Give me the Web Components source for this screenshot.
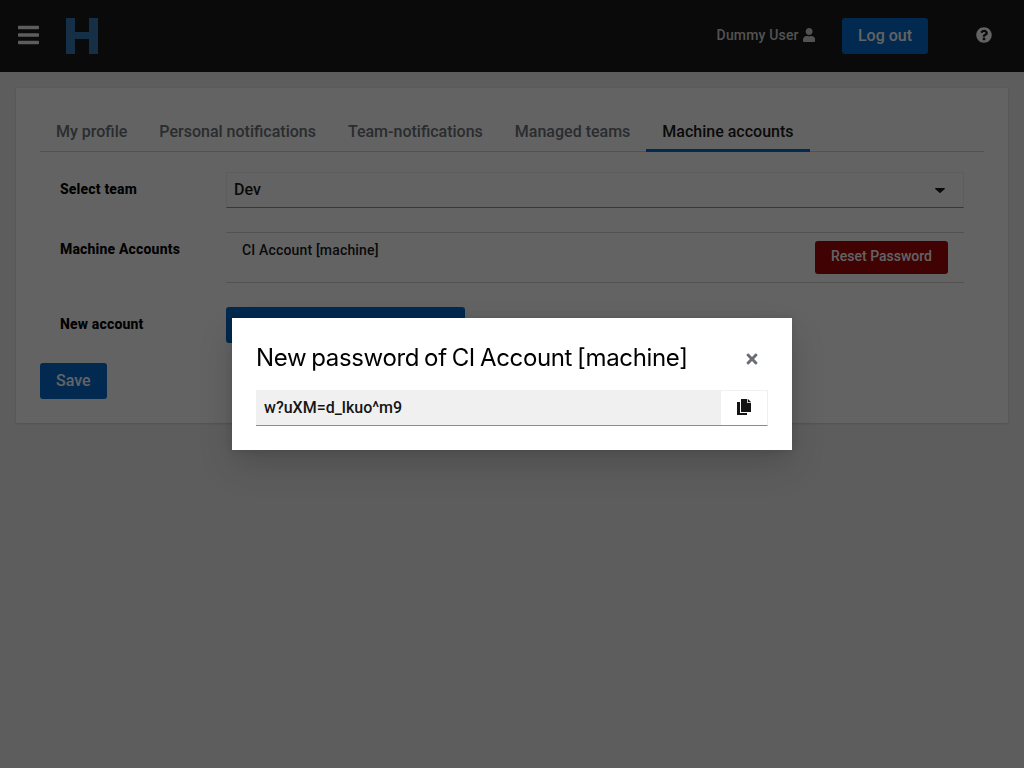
<!DOCTYPE html>
<html lang="en">
<head>
<meta charset="utf-8">
<title>Machine accounts</title>
<style>
html, body { margin: 0; height: 100%; overflow: hidden; }
body { background: #f0f0f0; color: #151515; font: 500 14px/21px Roboto, "Liberation Sans", sans-serif; letter-spacing: .16px; }
</style>
</head>
<body>
<app-header user="Dummy User"></app-header>
<app-card>
  <app-tabs>
    <app-tab>My profile</app-tab>
    <app-tab>Personal notifications</app-tab>
    <app-tab>Team-notifications</app-tab>
    <app-tab>Managed teams</app-tab>
    <app-tab current>Machine accounts</app-tab>
  </app-tabs>
  <app-form>
    <form-row label="Select team"><app-select>Dev</app-select></form-row>
    <form-row label="Machine Accounts">
      <account-item>CI Account [machine]<app-button slot="action" variant="danger">Reset Password</app-button></account-item>
    </form-row>
    <form-row label="New account"><app-button wide></app-button></form-row>
  </app-form>
  <app-button>Save</app-button>
</app-card>
<app-modal heading="New password of CI Account [machine]">
  <clipboard-copy>w?uXM=d_lkuo^m9</clipboard-copy>
</app-modal>
<script>
function define(name, html, setup) {
  const t = document.createElement('template');
  t.innerHTML = '<style>*{box-sizing:border-box}:host{display:block;box-sizing:border-box}svg{display:block;fill:currentColor}</style>' + html;
  customElements.define(name, class extends HTMLElement {
    constructor() {
      super();
      this.attachShadow({ mode: 'open' }).append(t.content.cloneNode(true));
    }
    connectedCallback() { if (setup) setup(this, this.shadowRoot); }
  });
}

define('app-button', `<style>
:host{display:inline-block;vertical-align:top;height:36px;padding:6px 16px;border-radius:3px;background:#06c;color:#fff;font-size:16px;font-weight:500;line-height:24px;letter-spacing:0;white-space:nowrap}
:host([variant=danger]){background:#a30000;font-size:14px;line-height:21px;height:33px;padding:5px 16px}
:host([wide]){width:239px}
</style><slot></slot>`);

define('app-header', `<style>
:host{display:flex;align-items:center;height:72px;background:#151515;color:#fff;padding-left:17.500px;padding-right:32px}
.menu{width:21px;height:24px;color:#f0f0f0;margin-top:-2px}
.logo{margin-left:27.500px;color:#3276b5}
.user{margin-left:auto;display:flex;align-items:center;color:#d2d2d2;margin-top:-2px}
.user svg{margin-left:4.500px}
app-button{margin-left:26.500px}
.help{margin-left:48px;margin-top:-2px}
</style>
<svg class="menu" viewBox="0 0 448 512"><path d="M16 132h416c8.800 0 16-7.200 16-16V76c0-8.800-7.200-16-16-16H16C7.200 60 0 67.200 0 76v40c0 8.800 7.200 16 16 16zm0 160h416c8.800 0 16-7.200 16-16v-40c0-8.800-7.200-16-16-16H16c-8.800 0-16 7.200-16 16v40c0 8.800 7.200 16 16 16zm0 160h416c8.800 0 16-7.200 16-16v-40c0-8.800-7.200-16-16-16H16c-8.800 0-16 7.200-16 16v40c0 8.800 7.200 16 16 16z"/></svg>
<svg class="logo" width="32" height="36" viewBox="0 0 32 36"><rect width="9" height="36"/><rect x="23" width="9" height="36"/><rect x="9" y="14" width="14" height="7"/></svg>
<div class="user"><span></span><svg width="12.25" height="14" viewBox="0 0 448 512"><path d="M224 256c70.700 0 128-57.300 128-128S294.700 0 224 0 96 57.300 96 128s57.300 128 128 128zm89.600 32h-16.700c-22.200 10.200-46.900 16-72.900 16s-50.600-5.800-72.900-16h-16.700C60.200 288 0 348.200 0 422.400V464c0 26.500 21.500 48 48 48h352c26.500 0 48-21.500 48-48v-41.600c0-74.200-60.200-134.400-134.400-134.400z"/></svg></div>
<app-button>Log out</app-button>
<svg class="help" width="16" height="16" viewBox="0 0 512 512"><path d="M504 256c0 136.997-111.043 248-248 248S8 392.997 8 256C8 119.083 119.043 8 256 8s248 111.083 248 248zM262.655 90c-54.497 0-89.255 22.957-116.549 63.758-3.536 5.286-2.353 12.415 2.715 16.258l34.699 26.310c5.205 3.947 12.621 3.008 16.665-2.122 17.864-22.658 30.113-35.797 57.303-35.797 20.429 0 45.698 13.148 45.698 32.958 0 14.976-12.363 22.667-32.534 33.976C247.128 238.528 216 254.941 216 296v4c0 6.627 5.373 12 12 12h56c6.627 0 12-5.373 12-12v-1.333c0-28.462 83.186-29.647 83.186-106.667 0-58.002-60.165-102-116.531-102zM256 338c-25.365 0-46 20.635-46 46 0 25.364 20.635 46 46 46s46-20.636 46-46c0-25.365-20.635-46-46-46z"/></svg>`,
(el, r) => { r.querySelector('.user span').textContent = el.getAttribute('user'); });

define('app-card', `<style>
:host{margin:16px;height:335px;padding:24px;background:#fff;box-shadow:0 1px 2px rgba(3,3,3,.12),0 0 2px rgba(3,3,3,.06)}
</style><slot></slot>`);

define('app-tabs', `<style>
:host{display:flex;height:40px;box-shadow:inset 0 -1px #d2d2d2}
</style><slot></slot>`);
define('app-tab', `<style>
:host{height:40px;padding:8px 16px;font-size:16px;font-weight:500;line-height:24px;letter-spacing:0;color:#6a6e73;white-space:nowrap}
:host([current]){color:#151515;border-bottom:3px solid #06c}
</style><slot></slot>`);

define('app-form', `<style>
:host{display:grid;padding:20px 20px 0;row-gap:24px;margin-bottom:20px}
</style><slot></slot>`);
define('form-row', `<style>
:host{display:grid;grid-template-columns:166px 1fr}
label{font-weight:800;letter-spacing:.17px;padding-top:7px;color:#000}
div{display:grid;justify-items:start}
::slotted(:not(app-button)){justify-self:stretch}
</style><label></label><div><slot></slot></div>`,
(el, r) => { r.querySelector('label').textContent = el.getAttribute('label'); });

define('app-select', `<style>
:host{display:flex;align-items:center;justify-content:space-between;height:36px;padding:0 18px 0 7px;border:1px solid #f0f0f0;border-bottom-color:#8a8d90;font-size:16px;font-weight:500;line-height:24px;letter-spacing:0}
</style><slot></slot><svg width="10" height="5" viewBox="0 0 10 5"><path d="M.6 0h8.800c.5 0 .7.600.400.900L5.500 4.800a.7.700 0 0 1-1 0L.2.900C-.1.600.100 0 .6 0z"/></svg>`);

define('account-item', `<style>
:host{display:flex;justify-content:space-between;height:51px;padding:7px 16px 0;border:solid #d2d2d2;border-width:1px 0}
slot[name]{display:block;padding-top:1px}
</style><span><slot></slot></span><div><slot name="action"></slot></div>`);

define('app-modal', `<style>
:host{position:fixed;inset:0;display:grid;place-items:center;background:rgba(3,3,3,.62)}
section{width:560px;height:132px;padding:24px;background:#fff;box-shadow:0 16px 32px rgba(3,3,3,.16),0 0 8px rgba(3,3,3,.1)}
header{display:flex;justify-content:space-between;height:32px;margin-bottom:16px}
h1{margin:0;font:400 24px/31px Inter,"Open Sans",sans-serif;color:#000;white-space:nowrap;letter-spacing:-.35px;word-spacing:-1.4px}
header svg{color:#6a6e73;margin:9px 10px 0 0}
</style><section role="dialog"><header><h1></h1>
<svg width="12" height="16" viewBox="0 0 352 512"><path d="M242.720 256l100.070-100.070c12.280-12.280 12.280-32.190 0-44.480l-22.240-22.240c-12.280-12.280-32.190-12.280-44.480 0L176 189.280 75.930 89.210c-12.280-12.280-32.190-12.280-44.480 0L9.210 111.450c-12.280 12.280-12.280 32.190 0 44.480L109.280 256 9.210 356.070c-12.280 12.280-12.280 32.190 0 44.480l22.240 22.240c12.280 12.280 32.200 12.280 44.480 0L176 322.720l100.070 100.070c12.280 12.280 32.200 12.280 44.480 0l22.240-22.240c12.280-12.280 12.280-32.190 0-44.480L242.720 256z"/></svg></header><slot></slot></section>`,
(el, r) => { r.querySelector('h1').textContent = el.getAttribute('heading'); });

define('clipboard-copy', `<style>
:host{display:flex;height:36px;font-size:16px;font-weight:500;line-height:24px;letter-spacing:0}
.value{flex:1;padding:6px 8px 5px;background:#f0f0f0;border-bottom:1px solid #8a8d90}
.copy{width:47px;display:grid;place-items:center;border:1px solid #f0f0f0;border-left:0;border-bottom-color:#8a8d90}
.copy svg{margin-top:-2px}
</style><div class="value"><slot></slot></div><div class="copy">
<svg width="14" height="16" viewBox="0 0 448 512"><path d="M320 448v64H0V96h96v352h224zm0-336V0H128v416h320V128H336zm128-15L351 0h-7v104h104z"/></svg></div>`);
</script>
</body>
</html>
